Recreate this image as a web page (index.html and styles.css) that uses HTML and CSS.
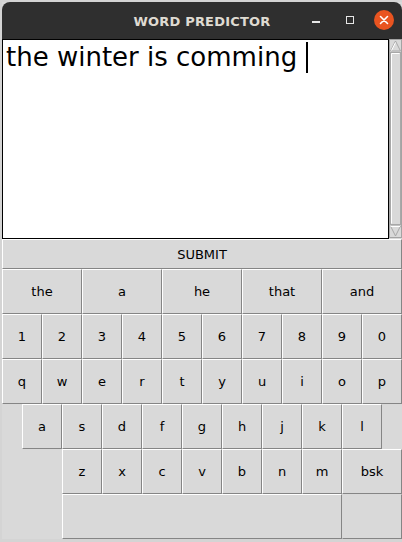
FILE: index.html
```html
<!DOCTYPE html>
<html>
<head>
<meta charset="utf-8">
<link rel="stylesheet" href="styles.css">
</head>
<body>
<div class="window">
  <div class="titlebar">
    <div class="title">WORD PREDICTOR</div>
    <div class="controls">
      <span class="ctl-min"></span>
      <span class="ctl-max"></span>
      <span class="ctl-close">
        <svg width="20" height="20" viewBox="0 0 20 20"><circle cx="10" cy="10" r="10" fill="#e95420"/><path d="M6.5 6.5 L13.5 13.5 M13.5 6.5 L6.5 13.5" stroke="#fff" stroke-width="1.6" stroke-linecap="round"/></svg>
      </span>
    </div>
  </div>
  <div class="editor">
    <div class="textbox"><span class="text">the winter is comming </span><span class="caret"></span></div>
    <div class="scrollbar">
      <svg width="13" height="199" viewBox="0 0 13 199">
        <rect x="0" y="0" width="13" height="199" fill="#d9d9d9"/>
        <rect x="0.5" y="0.5" width="12" height="198" fill="none" stroke="#a3a3a3"/>
        <path d="M6.5 2 L11.5 12 L1.5 12 Z" fill="#d9d9d9" stroke="#a8a8a8" stroke-width="1"/>
        <path d="M2.5 11.5 L6.5 3.5" stroke="#fff" stroke-width="1"/>
        <rect x="1.5" y="13.5" width="10" height="172" fill="#d9d9d9" stroke="#a8a8a8"/>
        <path d="M2.5 184.5 V14.5 H10.5" fill="none" stroke="#fff"/>
        <path d="M6.5 197 L11.5 187 L1.5 187 Z" fill="#d9d9d9" stroke="#a8a8a8" stroke-width="1"/>
        <path d="M1.5 187.5 H11" stroke="#fff" stroke-width="1"/>
      </svg>
    </div>
  </div>
  <div class="key submit">SUBMIT</div>
  <div class="keyboard">
    <div class="key w4">the</div>
    <div class="key w4">a</div>
    <div class="key w4">he</div>
    <div class="key w4">that</div>
    <div class="key w4">and</div>

    <div class="key">1</div><div class="key">2</div><div class="key">3</div><div class="key">4</div><div class="key">5</div>
    <div class="key">6</div><div class="key">7</div><div class="key">8</div><div class="key">9</div><div class="key">0</div>

    <div class="key">q</div><div class="key">w</div><div class="key">e</div><div class="key">r</div><div class="key">t</div>
    <div class="key">y</div><div class="key">u</div><div class="key">i</div><div class="key">o</div><div class="key">p</div>

    <div class="key start2">a</div><div class="key">s</div><div class="key">d</div><div class="key">f</div><div class="key">g</div>
    <div class="key">h</div><div class="key">j</div><div class="key">k</div><div class="key">l</div>

    <div class="key start4">z</div><div class="key">x</div><div class="key">c</div><div class="key">v</div><div class="key">b</div>
    <div class="key">n</div><div class="key">m</div><div class="key w3">bsk</div>

    <div class="key space"></div>
    <div class="key enter"></div>
  </div>
</div>
</body>
</html>
```
FILE: styles.css
```css
html, body {
  margin: 0;
  padding: 0;
}
body {
  background: #d4d4d4;
  width: 402px;
  height: 542px;
  overflow: hidden;
  font-family: "DejaVu Sans", sans-serif;
}
.window {
  margin: 2px 0 0 2px;
  width: 400px;
  background: #d9d9d9;
}
.titlebar {
  height: 37px;
  background: #2f2f2f;
  border-radius: 8px 8px 0 0;
  display: flex;
  align-items: center;
  justify-content: center;
  position: relative;
}
.title {
  color: #dfdbd2;
  font-weight: bold;
  font-size: 13px;
  letter-spacing: 0.2px;
  margin-top: 1px;
}
.controls {
  position: absolute;
  right: 8px;
  top: 8px;
  display: flex;
  align-items: center;
}
.ctl-min {
  width: 8px;
  height: 2px;
  background: #e6e6e6;
  margin-top: 4px;
  margin-right: 26px;
}
.ctl-max {
  width: 6px;
  height: 6px;
  border: 1.5px solid #e6e6e6;
  margin-right: 20px;
  margin-top: -1px;
}
.ctl-close {
  width: 20px;
  height: 20px;
  display: block;
}
.ctl-close svg { display: block; }
.editor {
  height: 200px;
  display: flex;
}
.textbox {
  flex: 1;
  background: #fff;
  border: 1px solid #000;
  padding: 2px 0 0 3px;
  font-size: 26px;
  color: #000;
  white-space: pre;
  display: flex;
  align-items: flex-start;
}
.text {
  line-height: 30px;
}
.caret {
  display: inline-block;
  width: 2px;
  height: 31px;
  background: #000;
  margin-left: 1px;
}
.scrollbar {
  width: 13px;
  height: 199px;
}
.scrollbar svg { display: block; }
.key {
  box-sizing: border-box;
  background: #d9d9d9;
  border: 1px solid;
  border-color: #ffffff #858585 #858585 #ffffff;
  display: flex;
  align-items: center;
  justify-content: center;
  font-size: 13px;
  color: #000;
  grid-column: span 2;
}
.submit {
  height: 30px;
}
.keyboard {
  display: grid;
  grid-template-columns: repeat(20, 20px);
  grid-template-rows: repeat(6, 45px);
}
.w4 { grid-column: span 4; }
.w3 { grid-column: span 3; }
.start2 { grid-column: 2 / span 2; }
.start4 { grid-column: 4 / span 2; }
.space { grid-column: 4 / span 14; }
.enter {
  grid-column: 18 / span 3;
  border-color: #d9d9d9 #858585 #858585 #d9d9d9;
}
```
